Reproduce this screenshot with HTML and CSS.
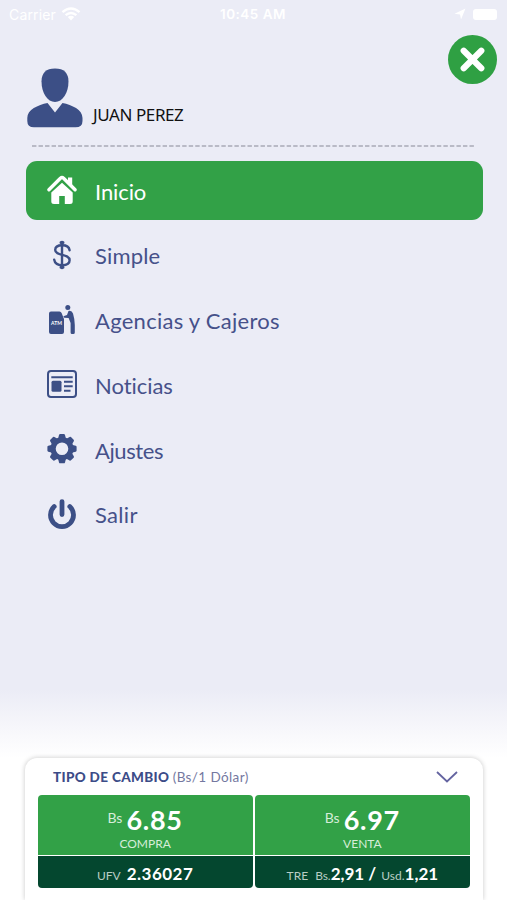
FILE: index.html
```html
<!DOCTYPE html>
<html lang="es">
<head>
<meta charset="utf-8">
<title>Menú</title>
<link rel="stylesheet" href="styles.css">
</head>
<body>
<div class="screen">
  <header class="status">
    <div class="status-left"><span class="carrier">Carrier</span>
      <svg class="wifi" viewBox="0 0 20 14" width="20" height="14"><path d="M1.500 5.200Q10-2 18.500 5.200M4.600 8.200Q10 3.600 15.400 8.200" fill="none" stroke="#fff" stroke-width="2.400"/><path d="M6.800 10Q10 7.400 13.200 10L10 13.400z" fill="#fff"/></svg>
    </div>
    <span class="clock">10:45 AM</span>
    <div class="status-right">
      <svg viewBox="0 0 12 12" width="12" height="12"><path d="M.5 5.800 11.500.5 7 11.500 6 6.500z" fill="#fff"/></svg>
      <span class="battery"></span>
    </div>
  </header>

  <section class="profile">
    <svg class="avatar" viewBox="0 0 56 60" width="56" height="60" fill="#3c4f86"><path d="M28 .5C37 .5 41.500 5 41.500 13.500C41.500 25 35.500 34 28 34S14.500 25 14.500 13.500C14.500 5 19 .5 28 .5z"/><path d="M20.500 35 28 44.500 35.500 35C45 37 55.500 41.500 55.500 50V53Q55.500 59.300 48.500 59.300H7Q.3 59.300.3 53V50C.3 41.500 11 37 20.500 35z"/></svg>
    <span class="name">JUAN PEREZ</span>
    <button class="close" aria-label="Cerrar"><svg viewBox="0 0 49 49" width="49" height="49"><circle cx="24.500" cy="24.500" r="24.500" fill="#2fa043"/><path d="M15.700 15.700 33.300 33.300M33.300 15.700 15.700 33.300" stroke="#fff" stroke-width="6.200" stroke-linecap="round"/></svg></button>
  </section>
  <svg class="divider" viewBox="0 0 444 2" width="444" height="2"><path d="M0 1H444" stroke="#b9bac6" stroke-width="2" stroke-dasharray="4.400 2.130"/></svg>

  <nav class="menu">
    <a class="item active"><svg viewBox="0 0 30 30" width="30" height="30"><path d="M1.900 14.800 13.400 3.300Q15 1.900 16.600 3.300L28.100 14.800" fill="none" stroke="#fff" stroke-width="3.400" stroke-linecap="round" stroke-linejoin="round"/><path d="M21 2.500H25.200V11.500L21 7.500z" fill="#fff"/><path d="M15 7.700 25.700 17.500V26.500Q25.700 29 23 29H17.800V21H12.200V29H7Q4.300 29 4.300 26.500V17.500z" fill="#fff"/></svg><span class="t-inicio">Inicio</span></a>
    <a class="item"><svg viewBox="0 0 30 30" width="30" height="30" fill="none" stroke="#3c4f86" stroke-linecap="round"><path d="M22.600 10.200C22.100 6.900 19.200 5.300 15.200 5.300C10.600 5.300 8.200 7.400 8.200 10C8.200 16.500 22.600 13.100 22.600 20.300C22.600 23.500 19.500 25.200 15.300 25.200C10.700 25.200 7.700 23.300 7.200 19.700" stroke-width="2.400"/><path d="M15 2V28" stroke-width="2.400"/><path d="M14 2.500h2M14 27.300h2" stroke-width="3"/></svg><span class="t-simple">Simple</span></a>
    <a class="item"><svg viewBox="0 0 30 30" width="30" height="30" fill="#3c4f86"><path d="M4 6.500H12.500Q14 6.500 14.600 8L17 14V27Q17 29 15 29H4Q2 29 2 27V8.500Q2 6.500 4 6.500z"/><circle cx="20.800" cy="2.400" r="2.500"/><path d="M21.500 5.900Q24.800 5.100 26 8.500Q27.500 13 27.800 20V27.500Q27.800 29 26.300 29H25Q23.600 29 23.600 27.500V18L21.600 13 17.200 12.800 16.400 11.300 20 10z"/><text class="atm" x="9.500" y="20">ATM</text></svg><span class="t-agencias">Agencias y Cajeros</span></a>
    <a class="item"><svg viewBox="0 0 30 30" width="30" height="30" fill="none" stroke="#3c4f86"><rect x="1" y="2.100" width="28" height="26" rx="3" stroke-width="2"/><path d="M4.300 8.200H25.700M17 12.700H25.700M17 17.200H25.700M17 21.700H23.500" stroke-width="2"/><rect x="4.500" y="11.700" width="10" height="11" rx="1.500" fill="#3c4f86" stroke="none"/></svg><span class="t-noticias">Noticias</span></a>
    <a class="item"><svg viewBox="0 0 30 30" width="30" height="30" fill="none" stroke="#3c4f86"><circle cx="15" cy="14.700" r="8.900" stroke-width="5.200"/><g fill="#3c4f86" stroke="none"><path id="tooth" d="M11 5 12 1Q12.300.1 13.100.1H16.900Q17.700.1 18 1L19 5z"/><use href="#tooth" transform="rotate(45 15 14.700)"/><use href="#tooth" transform="rotate(90 15 14.700)"/><use href="#tooth" transform="rotate(135 15 14.700)"/><use href="#tooth" transform="rotate(180 15 14.700)"/><use href="#tooth" transform="rotate(225 15 14.700)"/><use href="#tooth" transform="rotate(270 15 14.700)"/><use href="#tooth" transform="rotate(315 15 14.700)"/></g></svg><span class="t-ajustes">Ajustes</span></a>
    <a class="item"><svg viewBox="0 0 30 30" width="30" height="30" fill="none" stroke="#3c4f86" stroke-width="4.800" stroke-linecap="round"><path d="M7.200 7.600A11.500 11.500 0 1 0 22.800 7.600M15 2.600V15.500"/></svg><span class="t-salir">Salir</span></a>
  </nav>

  <section class="rates">
    <div class="rates-head">
      <span class="rates-title">TIPO DE CAMBIO</span><span class="rates-unit">(Bs/1 Dólar)</span>
      <svg class="chevron" viewBox="0 0 22 12" width="22" height="12"><path d="M1 1 11 10.500 21 1" fill="none" stroke="#6464a0" stroke-width="1.800"/></svg>
    </div>
    <div class="grid">
      <div class="tile">
        <div class="main"><div class="price"><small>Bs</small><b>6.85</b></div><div class="label">COMPRA</div></div>
        <div class="sub"><span class="ufv">UFV</span><b>2.36027</b></div>
      </div>
      <div class="tile">
        <div class="main"><div class="price"><small>Bs</small><b>6.97</b></div><div class="label">VENTA</div></div>
        <div class="sub"><span>TRE</span><span class="bs">Bs.</span><b class="tight">2,91 /</b><span class="usd">Usd.</span><b class="tight">1,21</b></div>
      </div>
    </div>
  </section>
</div>
</body>
</html>
```
FILE: styles.css
```css
* { box-sizing: border-box; }
body { margin: 0; }
.screen {
  width: 507px; height: 900px; overflow: hidden;
  display: flex; flex-direction: column;
  background: linear-gradient(#ebecf6 0, #ebecf6 690px, #f5f5fa 722px, #fff 758px);
  font-family: Lato, sans-serif; color: #46518a;
  font-variant-ligatures: none;
}
.status {
  height: 28px; padding: 0 10px 0 9px;
  display: grid; grid-template-columns: 1fr auto 1fr; align-items: center;
  color: #fff; font-family: Inter, sans-serif; font-size: 14px;
}
.status-left, .status-right { display: flex; align-items: center; }
.status-left { gap: 5px; }
.carrier { letter-spacing: .15px; }
.status-right { justify-content: flex-end; gap: 7px; }
.clock { font-weight: 600; font-size: 13.5px; letter-spacing: .5px; }
.battery { width: 24px; height: 11px; border-radius: 3px; background: #fff; }
.profile { position: relative; height: 117px; padding: 39.5px 0 0 27px; display: flex; align-items: flex-start; }
.name {
  margin: 35.5px 0 0 10px; line-height: 24px; color: #111;
  font-family: "Noto Sans", sans-serif; font-size: 17px; letter-spacing: -.42px;
}
.close { position: absolute; right: 10px; top: 7px; width: 49px; height: 49px; padding: 0; border: 0; background: none; }
.close svg { display: block; }
.divider { display: block; flex: none; margin: 0 0 14px 32px; }
.menu { display: flex; flex-direction: column; gap: 6.2px; padding: 0 24.5px 0 25.5px; }
.item {
  height: 58.5px; padding-left: 21.5px; border-radius: 11px;
  display: flex; align-items: center; gap: 18px;
  font-size: 22px; line-height: 30px;
}
.item svg { flex: none; overflow: visible; }
.item span { padding-top: 3px; white-space: nowrap; }
.t-inicio { letter-spacing: -.1px; }
.t-simple { letter-spacing: .15px; }
.t-agencias { letter-spacing: .27px; }
.t-noticias { letter-spacing: -.05px; }
.t-ajustes { letter-spacing: -.4px; }
.t-salir { letter-spacing: .3px; }
.active { background: #32a147; color: #fff; }
.atm { fill: #fff; font: 700 5px Lato, sans-serif; text-anchor: middle; }
.rates {
  margin: auto 24px 0 25px; height: 142px; padding: 0 13px 0 12.5px;
  border-radius: 12px 12px 0 0; background: #fff; box-shadow: 0 0 5px rgba(0, 0, 0, .22);
}
.rates-head { height: 37px; padding: 0 12px 0 15.5px; display: flex; align-items: center; font-size: 13.5px; }
.rates-title { font-weight: 900; letter-spacing: .35px; color: #3c4c88; }
.rates-unit { margin-left: 3.5px; letter-spacing: .4px; color: #7478a0; }
.chevron { margin-left: auto; }
.grid { display: grid; grid-template-columns: 1fr 1fr; gap: 2px; }
.tile { display: flex; flex-direction: column; gap: 1px; border-radius: 4px; overflow: hidden; color: #fff; }
.main { height: 60px; background: #32a147; text-align: center; }
.price { display: flex; justify-content: center; align-items: flex-start; gap: 4px; padding-top: 9px; }
.price small { font-size: 14px; line-height: 28px; color: #d6edd9; }
.price b { font-size: 27px; line-height: 32px; letter-spacing: .7px; }
.label { font-size: 12px; line-height: 15px; color: #d6edd9; }
.sub {
  height: 32px; display: flex; justify-content: center; align-items: baseline;
  background: #04472f; font-size: 12px; line-height: 35px; color: #b9cdc5;
}
.sub b { font-size: 17px; letter-spacing: .5px; color: #fff; }
.sub b.tight { letter-spacing: 0; }
.ufv { margin-right: 6px; }
.bs { margin-left: 7px; }
.usd { margin-left: 5px; }
```
